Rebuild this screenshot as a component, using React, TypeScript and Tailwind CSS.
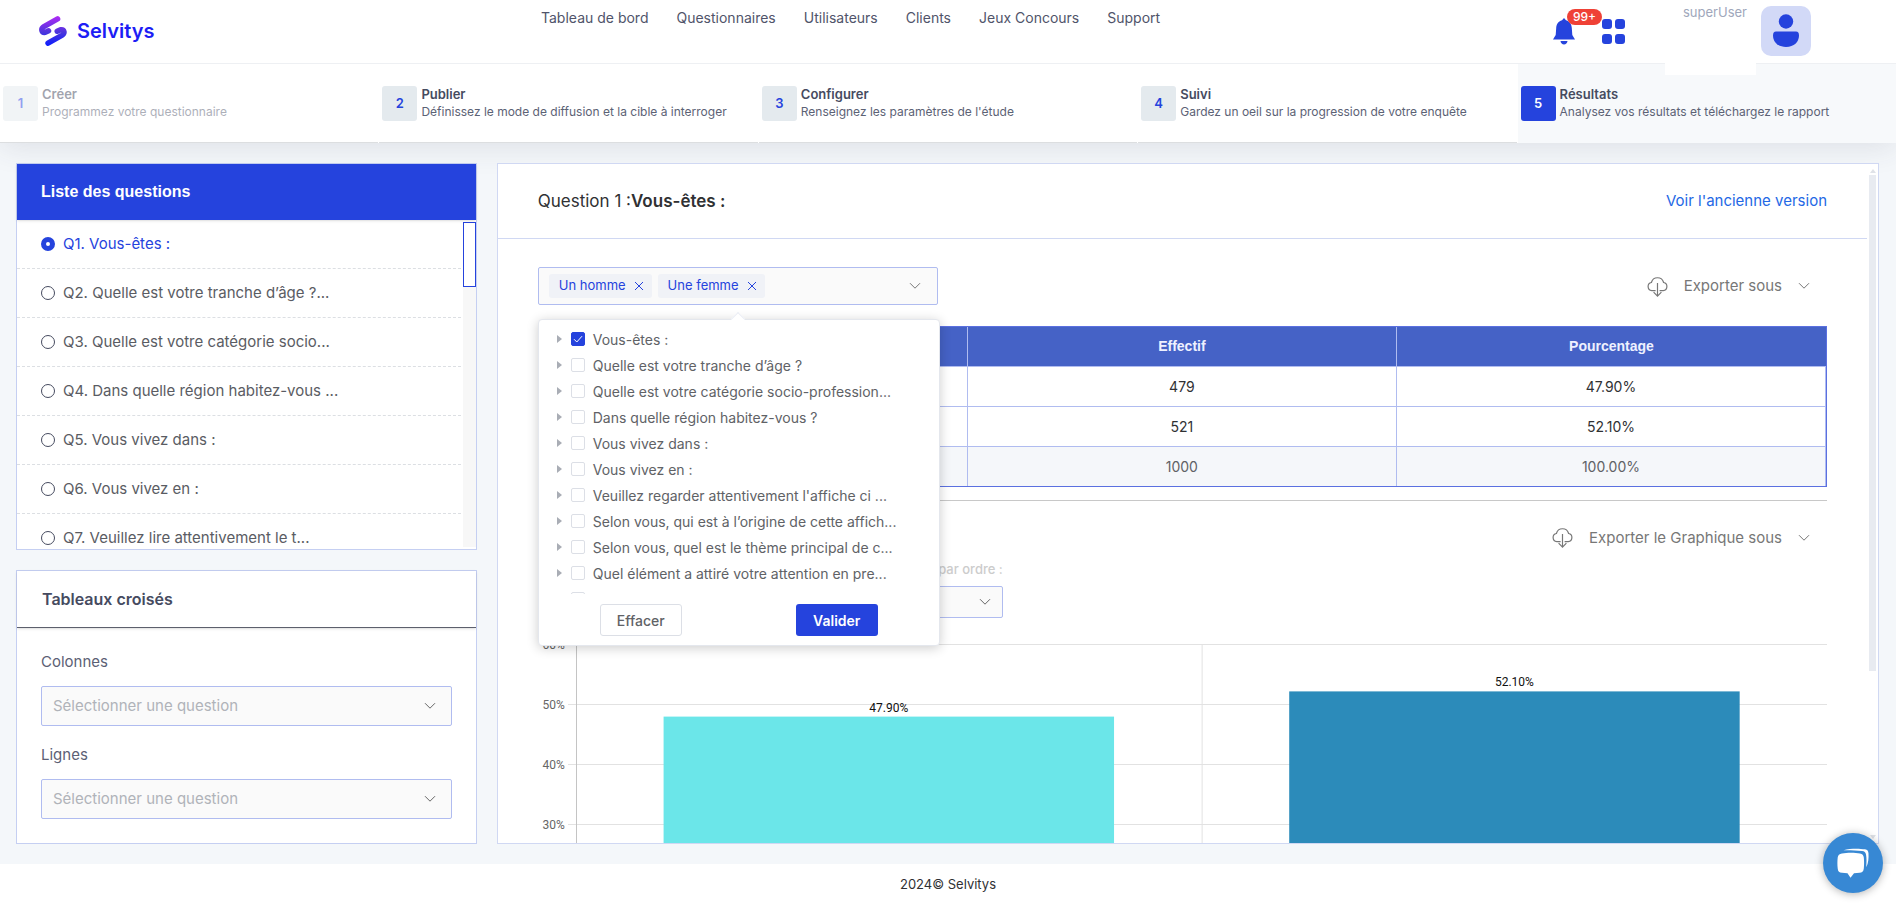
import { useState } from 'react';
import type { ReactNode } from 'react';
import clsx from 'clsx';

const navLinks = [
  'Tableau de bord',
  'Questionnaires',
  'Utilisateurs',
  'Clients',
  'Jeux Concours',
  'Support',
];

const steps = [
  { title: 'Créer', text: 'Programmez votre questionnaire', state: 'disabled' },
  {
    title: 'Publier',
    text: 'Définissez le mode de diffusion et la cible à interroger',
    state: 'idle',
  },
  {
    title: 'Configurer',
    text: "Renseignez les paramètres de l'étude",
    state: 'idle',
  },
  {
    title: 'Suivi',
    text: 'Gardez un oeil sur la progression de votre enquête',
    state: 'idle',
  },
  {
    title: 'Résultats',
    text: 'Analysez vos résultats et téléchargez le rapport',
    state: 'active',
  },
];

const questions = [
  'Q1. Vous-êtes :',
  'Q2. Quelle est votre tranche d’âge ?...',
  'Q3. Quelle est votre catégorie socio...',
  'Q4. Dans quelle région habitez-vous ...',
  'Q5. Vous vivez dans :',
  'Q6. Vous vivez en :',
  'Q7. Veuillez lire attentivement le t...',
];

const treeItems = [
  'Vous-êtes :',
  'Quelle est votre tranche d’âge ?',
  'Quelle est votre catégorie socio-profession...',
  'Dans quelle région habitez-vous ?',
  'Vous vivez dans :',
  'Vous vivez en :',
  "Veuillez regarder attentivement l'affiche ci ...",
  'Selon vous, qui est à l’origine de cette affich...',
  'Selon vous, quel est le thème principal de c...',
  'Quel élément a attiré votre attention en pre...',
  'Selon vous, les deux joueurs sur l’affiche ...',
];

const rows = [
  { label: 'Un homme', count: '479', percent: '47.90%' },
  { label: 'Une femme', count: '521', percent: '52.10%' },
];

const bars = [
  { value: 47.9, label: '47.90%', fill: '#6be6e9', x: '7%', center: '25%' },
  { value: 52.1, label: '52.10%', fill: '#2c8bba', x: '57%', center: '75%' },
];

const Chevron = ({ className }: { className?: string }) => (
  <svg
    width="12"
    height="8"
    viewBox="0 0 12 8"
    fill="none"
    stroke="currentColor"
    className={className}
  >
    <path d="M1 1.2 6 6.2 11 1.2" />
  </svg>
);

const Logo = () => (
  <svg width="28" height="30" viewBox="0 0 28 30" fill="none">
    <defs>
      <linearGradient id="logo" x1="14" y1="0" x2="14" y2="30" gradientUnits="userSpaceOnUse">
        <stop stopColor="#b02bf5" />
        <stop offset="0.55" stopColor="#4a35dc" />
        <stop offset="1" stopColor="#0a1cff" />
      </linearGradient>
    </defs>
    <g stroke="url(#logo)" strokeWidth="5.4" strokeLinecap="round" strokeLinejoin="round">
      <path d="M18.600 2.900 4.900 10.600C1.400 12.800 2.600 16.800 6.200 16.400L9.600 14.800" />
      <path d="M9 27.200 22.800 19.400C26.400 17.200 25.400 13.200 21.600 13.700L18.200 15.300" />
    </g>
  </svg>
);

const CloudDownload = () => (
  <svg width="21" height="21" viewBox="0 0 21 21" fill="none" stroke="#777" strokeWidth="1.2">
    <path d="M8.600 14.600H4.800A4.100 4.100 0 0 1 4.400 6.500 6.300 6.300 0 0 1 16.600 6.500 4.100 4.100 0 0 1 16.200 14.600H12.600" />
    <path d="M10.500 7v13M6.600 16.200l3.900 3.900 3.900-3.900" />
  </svg>
);

const Header = () => (
  <header className="relative z-10 flex h-16 items-start border-b border-[#eef0f3] bg-white">
    <a href="#" className="flex w-[541px] items-center gap-[10px] pl-[39px] pt-4">
      <Logo />
      <span className="text-[20px] font-semibold leading-[30px] text-[#1d1df5]">
        Selvitys
      </span>
    </a>
    <nav className="flex gap-7 pt-2">
      {navLinks.map((link) => (
        <a key={link} href="#" className="text-[14px] leading-5 text-[#50546a]">
          {link}
        </a>
      ))}
    </nav>
    <div className="ml-auto flex items-start pr-[85px]">
      <div className="flex gap-[27px] pt-[18px]">
        <button aria-label="Notifications" className="relative">
          <svg width="22" height="27" viewBox="0 0 22 27" fill="#2543dd">
            <path d="M11 0 13 2.300C17 3.400 18.600 6.400 18.800 10L19.300 17 22 21.400H0L2.700 17 3.200 10C3.400 6.400 5 3.400 9 2.300Z" />
            <path d="M7.500 23h7c-.3 2.200-1.700 3.400-3.500 3.400S7.800 25.200 7.500 23Z" />
          </svg>
          <span className="absolute -top-[9px] left-[14px] rounded-full bg-[#ef4136] px-[6px] text-[12px] font-medium leading-4 text-white">
            99+
          </span>
        </button>
        <button aria-label="Applications" className="grid grid-cols-2 gap-[3px] pt-[1px]">
          {[0, 1, 2, 3].map((i) => (
            <span key={i} className="size-[10px] rounded-[3px] bg-[#2543dd]" />
          ))}
        </button>
      </div>
      <div className="ml-10 h-[75px] w-[91px] bg-white pl-[18px] pt-[2px]">
        <span className="block text-[13px] leading-5 text-[#a0a7bb]">superUser</span>
      </div>
      <button
        aria-label="Profil"
        className="ml-[5px] mt-[6px] flex size-[50px] items-center justify-center rounded-[10px] bg-[#d2d9f7]"
      >
        <svg width="26" height="34" viewBox="0 0 26 34" fill="#2543dd">
          <circle cx="13" cy="7.500" r="7.200" />
          <path d="M3 17.500h20c2 0 3 1.500 3 4C26 28 21 33 13 33S0 28 0 21.500c0-2.500 1-4 3-4Z" />
        </svg>
      </button>
    </div>
  </header>
);

const Stepper = () => (
  <ol className="grid grid-cols-5 gap-px bg-white shadow-[0_4px_30px_rgba(60,60,80,0.12)]">
    {steps.map((step) => (
      <li
        key={step.title}
        className={clsx(
          'flex h-[79px] gap-1 border-b pl-[3px] pt-[22px]',
          step.state === 'active'
            ? 'border-[#f7f9fb] bg-[#f7f9fb]'
            : 'border-[#dcdee0]',
        )}
      >
        <span
          className={clsx(
            'flex size-[35px] shrink-0 items-center justify-center rounded-[3px] text-[13px] font-semibold',
            step.state === 'active' && 'bg-[#2543dd] text-white',
            step.state === 'idle' && 'bg-[#e4eaee] text-[#2543dd]',
            step.state === 'disabled' && 'bg-[#f1f4f6] text-[#929ff0]',
          )}
        >
          {steps.indexOf(step) + 1}
        </span>
        <div className={clsx('whitespace-nowrap', step.state === 'disabled' && 'opacity-50')}>
          <p className="text-[13px] font-semibold leading-4 text-[#464b5f]">{step.title}</p>
          <p className="text-[12px] leading-5 text-[#5c6275]">{step.text}</p>
        </div>
      </li>
    ))}
  </ol>
);

const QuestionList = () => {
  const [current, setCurrent] = useState(0);

  return (
    <section className="flex min-h-0 flex-1 flex-col border border-[#c5cff2] bg-white">
      <h2 className="z-10 bg-[#2543dd] px-6 font-['Liberation_Sans'] text-[16px] font-bold leading-[56px] text-white shadow-sm">
        Liste des questions
      </h2>
      <div className="relative min-h-0 flex-1 overflow-hidden">
        <ul className="mr-[15px]">
          {questions.map((question, i) => (
            <li key={question} className="border-b border-dashed border-[#dcdfe3]">
              <label
                className={clsx(
                  'flex h-12 items-center gap-2 pl-6 text-[15px]',
                  current === i ? 'text-[#2543dd]' : 'text-[#5a5c63]',
                )}
              >
                <input
                  type="radio"
                  name="question"
                  checked={current === i}
                  onChange={() => setCurrent(i)}
                  className="size-[14px] appearance-none rounded-full border border-[#464b5f] bg-white checked:border-[5px] checked:border-[#2543dd]"
                />
                {question}
              </label>
            </li>
          ))}
        </ul>
        {/* Scrollbar */}
        <div className="absolute bottom-[2px] right-0 top-[2px] w-[13px] bg-[#f7f7f7]">
          <div className="h-[65px] border border-[#2543dd] bg-white" />
        </div>
      </div>
    </section>
  );
};

const QuestionSelect = ({ id, label }: { id: string; label: string }) => (
  <div>
    <label htmlFor={id} className="block text-[15px] leading-5 text-[#5c5f75]">
      {label}
    </label>
    <div className="relative mt-[14px]">
      <select
        id={id}
        className="h-10 w-full appearance-none rounded-[2px] border border-[#b0bcf0] bg-[#fafafa] px-[11px] text-[15px] text-[#b0b3b9]"
      >
        <option>Sélectionner une question</option>
      </select>
      <Chevron className="pointer-events-none absolute right-4 top-4 text-[#666]" />
    </div>
  </div>
);

const CrossTables = () => (
  <section className="border border-[#c5cff2] bg-white">
    <h2 className="border-b border-[#5c5f6c] px-[25px] text-[16px] font-semibold leading-[56px] text-[#464b5f] shadow-sm">
      Tableaux croisés
    </h2>
    <div className="flex flex-col gap-[19px] p-6">
      <QuestionSelect id="colonnes" label="Colonnes" />
      <QuestionSelect id="lignes" label="Lignes" />
    </div>
  </section>
);

const Tag = ({ children }: { children: ReactNode }) => (
  <span className="flex h-6 items-center gap-2 rounded-[3px] bg-[#f0f2f7] pl-[10px] pr-2 text-[13px] text-[#2543dd]">
    {children}
    <button aria-label="Retirer">
      <svg width="10" height="10" viewBox="0 0 10 10" stroke="currentColor">
        <path d="M1 1l8 8M9 1 1 9" />
      </svg>
    </button>
  </span>
);

const TreeMenu = () => (
  <div className="absolute left-0 top-[52px] z-20 w-[402px] rounded-[4px] border border-[#e4e7ed] bg-white shadow-[0_2px_12px_rgba(0,0,0,0.2)]">
    <span className="absolute -top-[6px] left-[194px] size-[10px] rotate-45 border-l border-t border-[#ebeef5] bg-white" />
    <ul className="relative mt-[6px] h-[268px] overflow-hidden">
      {treeItems.map((item, i) => (
        <li key={item} className="flex h-[26px] items-center pl-[18px]">
          <svg width="5" height="8" viewBox="0 0 5 8" fill="#a9adb5">
            <path d="M0 0 5 4 0 8Z" />
          </svg>
          <label className="flex items-center pl-[9px] text-[14px] text-[#606266]">
            <span className="relative mr-2 flex">
              <input
                type="checkbox"
                defaultChecked={i === 0}
                className="size-[14px] appearance-none rounded-[2px] border border-[#dcdfe6] bg-white checked:border-[#2543dd] checked:bg-[#2543dd]"
              />
              {i === 0 && (
                <svg
                  width="14"
                  height="14"
                  viewBox="0 0 14 14"
                  fill="none"
                  stroke="white"
                  className="pointer-events-none absolute"
                >
                  <path d="M3 7.200 5.800 10 11 4.200" />
                </svg>
              )}
            </span>
            {item}
          </label>
        </li>
      ))}
    </ul>
    <div className="flex justify-between px-[61px] pb-[9px] pt-[10px]">
      <button className="h-8 w-[82px] rounded-[3px] border border-[#dcdfe6] text-[14px] font-medium text-[#606266]">
        Effacer
      </button>
      <button className="h-8 w-[82px] rounded-[3px] bg-[#2543dd] text-[14px] font-semibold text-white">
        Valider
      </button>
    </div>
  </div>
);

const ExportButton = ({ children }: { children: ReactNode }) => (
  <button className="flex items-center pr-[17px] text-[15px] leading-5 text-[#777]">
    <CloudDownload />
    <span className="px-4">{children}</span>
    <Chevron />
  </button>
);

const Chart = () => (
  <div className="flex">
    {/* Y axis */}
    <div className="flex w-[30px] shrink-0 flex-col pr-[3px] text-right font-['Roboto'] text-[12px] leading-[60px] text-[#666]">
      {[60, 50, 40, 30, 20, 10, 0].map((tick) => (
        <span key={tick} className="h-[60px]">
          {tick}%
        </span>
      ))}
    </div>
    <svg className="mt-[29px] h-[362px] min-w-0 flex-1 font-['Roboto']">
      {[0, 1, 2, 3, 4, 5, 6].map((i) => (
        <rect key={i} x="0" y={i * 60} width="100%" height="1" fill="#e2e2e2" />
      ))}
      <svg x="8" width="calc(100% - 8px)" height="362" overflow="visible">
        <rect x="0" y="0" width="1" height="361" fill="#c4c4c4" />
        <rect x="50%" y="0" width="1" height="361" fill="#e2e2e2" />
        {bars.map((bar) => (
          <g key={bar.label}>
            <rect
              x={bar.x}
              y={(60 - bar.value) * 6}
              width="36%"
              height={bar.value * 6}
              fill={bar.fill}
            />
            <text
              x={bar.center}
              y={(60 - bar.value) * 6 - 5}
              textAnchor="middle"
              fontSize="12"
              fill="#111"
            >
              {bar.label}
            </text>
          </g>
        ))}
      </svg>
    </svg>
  </div>
);

const headCell = 'h-10 border-b border-r border-[#b0bcf0] last:border-r-0';
const cell = 'h-10 border-b border-r border-[#b0bcf0] text-center';
const totalCell = 'h-[39px] border-r border-[#b0bcf0] text-center';

const Results = () => (
  <section className="relative min-h-0 overflow-hidden border border-[#d0d8f3] bg-white">
    <div className="mr-[11px] flex h-[75px] items-center justify-between border-b border-[#d0d8f3] px-10">
      <h1 className="text-[17px] leading-6 text-[#303133]">
        Question 1 :<span className="font-semibold">Vous-êtes :</span>
      </h1>
      <a href="#" className="text-[15px] leading-5 text-[#2468e5]">
        Voir l'ancienne version
      </a>
    </div>

    <div className="ml-10 mr-[51px] pt-7">
      <div className="flex items-center justify-between">
        <div className="relative w-[400px]">
          <div className="flex h-[38px] items-center gap-[6px] rounded-[2px] border border-[#b0bcf0] bg-[#fafafa] pl-[10px] pr-4">
            <Tag>Un homme</Tag>
            <Tag>Une femme</Tag>
            <button aria-label="Ouvrir la liste" className="ml-auto text-[#777]">
              <Chevron />
            </button>
          </div>
          <TreeMenu />
        </div>
        <ExportButton>Exporter sous</ExportButton>
      </div>

      <div className="mt-[21px] border border-[#5b70e0]">
        <table className="w-full table-fixed border-separate border-spacing-0 text-[14px] text-[#303133]">
          <thead>
            <tr className="bg-[#4562c6] font-['Liberation_Sans'] text-[#eef1ff]">
              <th className={headCell}>Réponse</th>
              <th className={headCell}>Effectif</th>
              <th className={headCell}>Pourcentage</th>
            </tr>
          </thead>
          <tbody>
            {rows.map((row) => (
              <tr key={row.label}>
                <td className={cell}>{row.label}</td>
                <td className={cell}>{row.count}</td>
                <td className={cell}>{row.percent}</td>
              </tr>
            ))}
            <tr className="bg-[#f5f7fa] text-[#606266]">
              <td className={totalCell}>Total</td>
              <td className={totalCell}>1000</td>
              <td className={totalCell}>100.00%</td>
            </tr>
          </tbody>
        </table>
      </div>

      <div className="mt-[13px] flex justify-end border-t border-[#c8c8c8] pt-[26px]">
        <ExportButton>Exporter le Graphique sous</ExportButton>
      </div>

      <div className="mt-[11px] flex w-[465px] justify-end">
        <div className="w-[200px]">
          <label
            htmlFor="ordre"
            className="block text-right text-[13px] font-medium leading-5 text-[#ccc]"
          >
            Trier par ordre :
          </label>
          <div className="relative mt-[7px]">
            <select
              id="ordre"
              className="h-8 w-full appearance-none rounded-[2px] border border-[#b0bcf0] bg-[#fafafa] px-3 text-[14px] text-[#606266]"
            >
              <option>Défaut</option>
            </select>
            <Chevron className="pointer-events-none absolute right-3 top-3 text-[#666]" />
          </div>
        </div>
      </div>

      <div className="-mt-[3px]">
        <Chart />
      </div>
    </div>

    {/* Scrollbar */}
    <div className="absolute inset-y-0 right-[2px] flex w-[7px] flex-col items-center pb-1 pt-[5px]">
      <svg width="6" height="4" viewBox="0 0 6 4" fill="#dfe2e8">
        <path d="M0 4 3 0 6 4Z" />
      </svg>
      <div className="mt-[2px] h-[74%] w-full bg-[#e8ebf1]" />
      <svg width="6" height="4" viewBox="0 0 6 4" fill="#dfe2e8" className="mt-auto">
        <path d="M0 0 3 4 6 0Z" />
      </svg>
    </div>
  </section>
);

const ChatButton = () => (
  <button
    aria-label="Discuter"
    className="fixed bottom-[13px] right-[13px] z-30 flex size-[60px] items-center justify-center rounded-full bg-[#3788d4] shadow-[0_1px_8px_rgba(0,0,0,0.3)]"
  >
    <svg width="32" height="30" viewBox="0 0 32 30" fill="white">
      <path d="M5 5.500C10 4.600 18 4.600 23 5.500 25.500 6 26.500 7 26.800 9.500 27.200 13 27.200 17 26.800 20.500 26.500 23.500 25 24.500 22.500 24.800L17 25.200 13.500 29.700 10.500 25.200 5 24.800C2.200 24.500 1 23.500.7 20.500.3 17 .3 13 .7 9.500 1 7 2.300 6 5 5.500Z" />
      <path d="M6.500 2.200C13 .3 22 .3 28 1.300 30.500 1.800 31.300 3 31.500 5.500 31.700 10 31.500 15 29.200 19.200 29.600 14 29.700 10 29 6.500 28.500 4 27.500 3.300 25 3 19 2.300 12 2 6.500 2.200Z" />
    </svg>
  </button>
);

export default function App() {
  return (
    <div className="flex h-screen flex-col bg-[#f4f7fa] font-['Inter',sans-serif]">
      <Header />
      <Stepper />
      <main className="grid min-h-0 flex-1 grid-cols-[1fr_3fr] grid-rows-1 gap-5 py-5 pl-4 pr-[17px]">
        <div className="flex min-h-0 flex-col gap-5">
          <QuestionList />
          <CrossTables />
        </div>
        <Results />
      </main>
      <footer className="flex h-[42px] shrink-0 items-center justify-center bg-white text-[13px] text-[#303133]">
        2024© Selvitys
      </footer>
      <ChatButton />
    </div>
  );
}
